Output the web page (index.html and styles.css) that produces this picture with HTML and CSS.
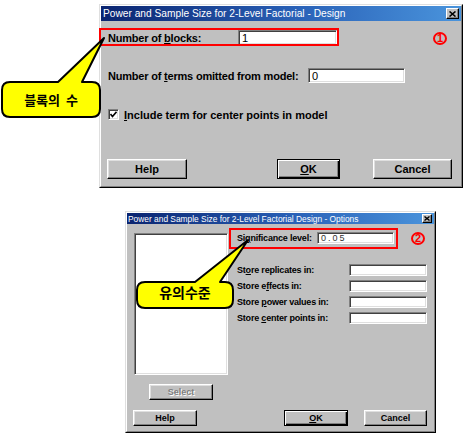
FILE: index.html
```html
<!DOCTYPE html>
<html>
<head>
<meta charset="utf-8">
<link rel="stylesheet" href="styles.css">
</head>
<body>
<div class="win win-design">
  <div class="win-inner">
    <div class="title title-lg">
      <span>Power and Sample Size for 2-Level Factorial - Design</span>
      <span class="close close-lg"><svg width="7" height="6" viewBox="0 0 7 6"><path d="M0.5 0.5 L6.5 5.5 M6.5 0.5 L0.5 5.5" stroke="#000" stroke-width="1.6"/></svg></span>
    </div>
    <div class="d1-body">
      <div class="row row1">
        <span class="lbl lbl-blocks">Number of <u>b</u>locks:</span>
        <span class="field field-blocks">1</span>
      </div>
      <div class="row row2">
        <span class="lbl lbl-terms">Number of <u>t</u>erms omitted from model:</span>
        <span class="field field-terms">0</span>
      </div>
      <div class="row row3">
        <span class="check"><svg width="7" height="7" viewBox="0 0 7 7"><path d="M0.5 3 L2.5 5.5 L6.5 0.8" stroke="#000" stroke-width="1.6" fill="none"/></svg></span>
        <span class="lbl lbl-inc"><u>I</u>nclude term for center points in model</span>
      </div>
      <div class="btn-row btn-row1">
        <span class="btn btn-help1">Help</span>
        <span class="btn btn-default btn-ok1"><u>O</u>K</span>
        <span class="btn btn-cancel1">Cancel</span>
      </div>
    </div>
  </div>
</div>

<div class="win win-options">
  <div class="win-inner">
    <div class="title title-sm">
      <span>Power and Sample Size for 2-Level Factorial Design - Options</span>
      <span class="close close-sm"><svg width="6" height="5" viewBox="0 0 6 5"><path d="M0.5 0.5 L5.5 4.5 M5.5 0.5 L0.5 4.5" stroke="#000" stroke-width="1.4"/></svg></span>
    </div>
    <div class="d2-main">
      <div class="d2-left">
        <div class="listbox"></div>
        <span class="btn btn-sm btn-select">Select</span>
      </div>
      <div class="d2-right">
        <div class="srow srow-sig">
          <span class="slbl slbl-sig">Si<u>g</u>nificance level:</span>
          <span class="sfield sfield-sig">0.05</span>
        </div>
        <div class="srow srow-first">
          <span class="slbl">St<u>o</u>re replicates in:</span>
          <span class="sfield"></span>
        </div>
        <div class="srow">
          <span class="slbl">Store e<u>f</u>fects in:</span>
          <span class="sfield"></span>
        </div>
        <div class="srow">
          <span class="slbl">Store <u>p</u>ower values in:</span>
          <span class="sfield"></span>
        </div>
        <div class="srow">
          <span class="slbl">Store <u>c</u>enter points in:</span>
          <span class="sfield"></span>
        </div>
      </div>
    </div>
    <div class="btn-row btn-row2">
      <span class="btn btn-sm btn-help2">Help</span>
      <span class="btn btn-sm btn-default btn-ok2"><u>O</u>K</span>
      <span class="btn btn-sm btn-cancel2">Cancel</span>
    </div>
  </div>
</div>

<div class="redbox redbox1"></div>
<div class="redbox redbox2"></div>
<div class="circ circ1">1</div>
<div class="circ circ2">2</div>

<svg class="callout callout1" width="110" height="90" viewBox="0 0 110 90">
  <path d="M10 52 H58 L104 8 L82 52 H92 Q100 52 100 60 V79 Q100 87 92 87 H10 Q2 87 2 79 V60 Q2 52 10 52 Z" fill="#ffff00" stroke="#000" stroke-width="2" stroke-linejoin="round"/>
</svg>
<div class="ctext ctext1">블록의&nbsp;&nbsp;수</div>

<svg class="callout callout2" width="130" height="85" viewBox="0 0 130 85">
  <path d="M15 52 H65 L118 10 L90 52 H95 Q103 52 103 60 V70 Q103 78 95 78 H15 Q7 78 7 70 V60 Q7 52 15 52 Z" fill="#ffff00" stroke="#000" stroke-width="2" stroke-linejoin="round"/>
</svg>
<div class="ctext ctext2">유의수준</div>
</body>
</html>
```

FILE: styles.css
```css
* { box-sizing: border-box; }
body {
  margin: 0;
  width: 465px;
  height: 441px;
  overflow: hidden;
  position: relative;
  background: #fff;
  font-family: "Liberation Sans", Arial, sans-serif;
  color: #000;
}
u { text-decoration: underline; text-underline-offset: 1px; }

.win {
  background: #c0c0c0;
  border: 1px solid;
  border-color: #dfdfdf #000 #000 #dfdfdf;
}
.win-inner {
  height: 100%;
  border: 1px solid;
  border-color: #fff #808080 #808080 #fff;
}
.win-design { margin: 4px 0 0 99px; width: 364px; height: 184px; }
.win-options { margin: 23px 0 0 125px; width: 311px; height: 222px; }

.title {
  display: flex;
  align-items: center;
  justify-content: space-between;
  color: #fff;
  background: linear-gradient(90deg, #0a2470 0%, #2a62b8 55%, #4a94dc 100%);
  white-space: nowrap;
}
.title-lg { height: 15px; font-size: 10.2px; padding: 0 2px 0 2px; }
.title-sm { height: 11px; font-size: 8.4px; padding: 0 2px 0 1px; }

.close {
  display: flex;
  align-items: center;
  justify-content: center;
  background: #c0c0c0;
  border: 1px solid;
  border-color: #fff #000 #000 #fff;
  box-shadow: inset -1px -1px #808080;
}
.close-lg { width: 13px; height: 11px; }
.close-sm { width: 10px; height: 9px; }

/* Design dialog */
.d1-body { padding-left: 7px; }
.row { display: flex; align-items: center; height: 15px; }
.row1 { margin-top: 9px; }
.row2 { margin-top: 23px; }
.row3 { margin-top: 24px; }
.lbl {
  font-size: 11px;
  font-weight: bold;
  letter-spacing: -0.2px;
  white-space: nowrap;
}
.lbl-inc { letter-spacing: 0; }
.lbl-blocks { width: 130px; flex: none; }
.lbl-terms { width: 200px; flex: none; }

.field {
  display: flex;
  align-items: center;
  height: 15px;
  background: #fff;
  font-size: 11px;
  padding-left: 3px;
  border: 1px solid;
  border-color: #808080 #fff #fff #808080;
  box-shadow: inset 1px 1px #404040, inset -1px -1px #dfdfdf;
}
.field-blocks { width: 99px; }
.field-terms { width: 97px; }

.check {
  width: 11px;
  height: 11px;
  margin-right: 5px;
  flex: none;
  background: #fff;
  display: flex;
  align-items: center;
  justify-content: center;
  border: 1px solid;
  border-color: #808080 #fff #fff #808080;
  box-shadow: inset 1px 1px #404040, inset -1px -1px #dfdfdf;
}

.btn-row { display: flex; }
.btn-row1 { margin-top: 37px; margin-left: -1px; }
.btn {
  display: flex;
  align-items: center;
  justify-content: center;
  height: 20px;
  background: #c0c0c0;
  font-size: 11px;
  font-weight: bold;
  border: 1px solid;
  border-color: #fff #000 #000 #fff;
  box-shadow: inset -1px -1px #808080, inset 1px 1px #dfdfdf;
}
.btn-default {
  border-color: #000;
  box-shadow: inset 1px 1px #fff, inset -1px -1px #000, inset -2px -2px #808080;
}
.btn-help1 { width: 80px; }
.btn-ok1 { width: 63px; margin-left: 90px; }
.btn-cancel1 { width: 79px; margin-left: 33px; }

/* Options dialog */
.d2-main { display: flex; }
.d2-left { padding-left: 7px; display: flex; flex-direction: column; }
.listbox {
  width: 94px;
  height: 142px;
  margin-top: 9px;
  background: #fff;
  border: 1px solid;
  border-color: #808080 #fff #fff #808080;
  box-shadow: inset 1px 1px #404040, inset -1px -1px #dfdfdf;
}
.btn-sm { height: 16px; font-size: 9px; }
.btn-select {
  width: 64px;
  margin: 9px 0 0 15px;
  color: #808080;
  text-shadow: 1px 1px #fff;
}
.d2-right { margin-left: 9px; }
.srow { display: flex; align-items: center; height: 12px; margin-top: 4px; }
.srow-sig { margin-top: 8px; }
.srow-first { margin-top: 20px; }
.slbl {
  width: 112px;
  flex: none;
  font-size: 9px;
  font-weight: bold;
  letter-spacing: -0.2px;
  white-space: nowrap;
}
.slbl-sig { width: 80px; }
.sfield {
  width: 78px;
  height: 12px;
  background: #fff;
  font-size: 9px;
  padding-left: 3px;
  display: flex;
  align-items: center;
  border: 1px solid;
  border-color: #808080 #fff #fff #808080;
  box-shadow: inset 1px 1px #404040, inset -1px -1px #dfdfdf;
}
.sfield-sig { width: 77px; letter-spacing: 2px; color: #333; }

.btn-row2 { margin-top: 10px; padding-left: 6px; }
.btn-help2 { width: 64px; }
.btn-ok2 { width: 64px; margin-left: 87px; }
.btn-cancel2 { width: 63px; margin-left: 16px; }

/* Annotations */
.redbox { position: absolute; border: 2px solid #ff0000; }
.redbox1 { left: 99px; top: 28px; width: 240px; height: 18px; }
.redbox2 { left: 229px; top: 228px; width: 169px; height: 21px; }

.circ {
  position: absolute;
  width: 14px;
  height: 13px;
  border: 2px solid #ff0000;
  border-radius: 50%;
  color: #ff0000;
  font-size: 11px;
  font-weight: bold;
  display: flex;
  align-items: center;
  justify-content: center;
  line-height: 1;
}
.circ1 { left: 433px; top: 32px; }
.circ2 { left: 411px; top: 232px; }

.callout { position: absolute; }
.callout1 { left: 0; top: 30px; }
.callout2 { left: 130px; top: 230px; }
.ctext {
  position: absolute;
  display: flex;
  align-items: center;
  justify-content: center;
  font-family: "Noto Sans CJK KR", sans-serif;
  font-weight: bold;
  white-space: nowrap;
}
.ctext1 { left: 2px; top: 82px; width: 98px; height: 35px; font-size: 13px; }
.ctext2 { left: 137px; top: 280px; width: 96px; height: 24px; font-size: 14px; }
```
